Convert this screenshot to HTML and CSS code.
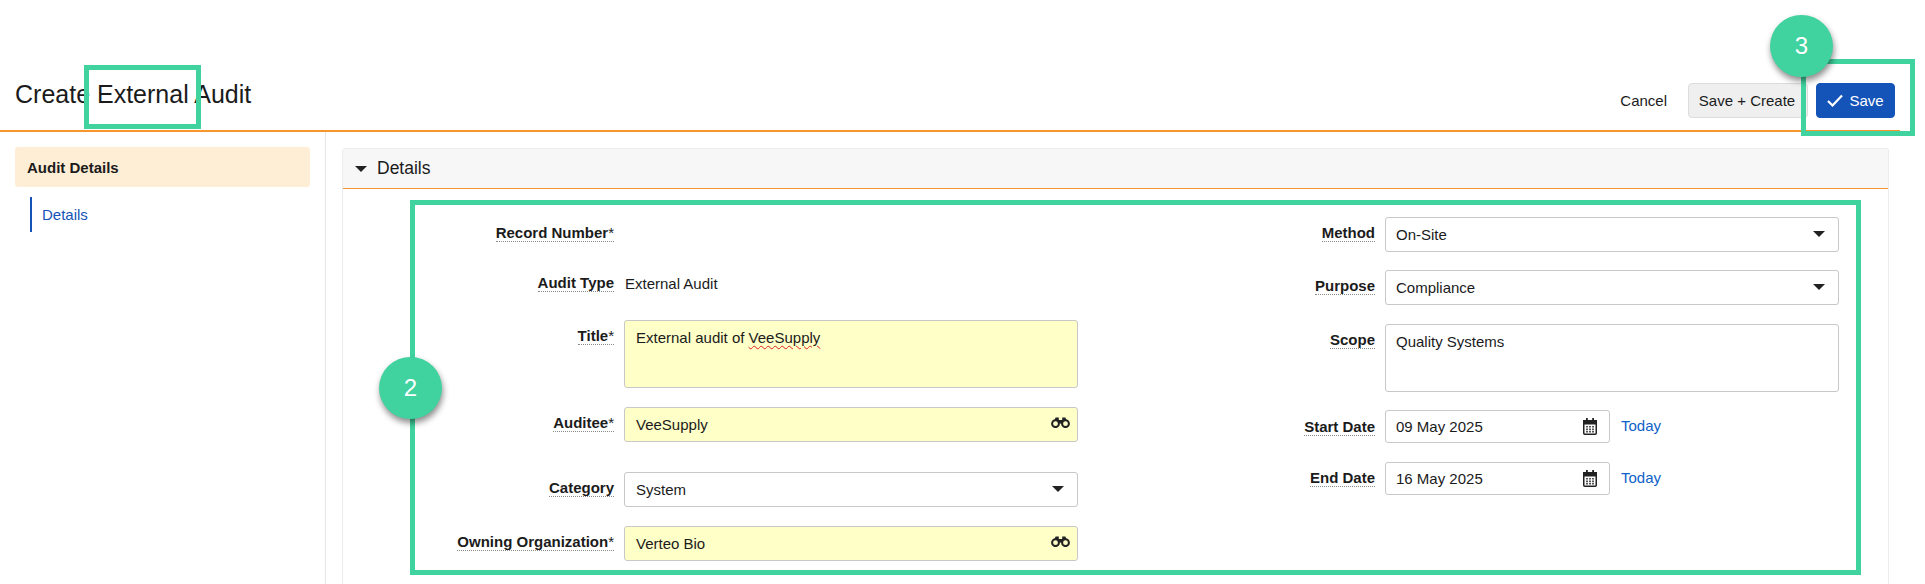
FILE: index.html
```html
<!DOCTYPE html>
<html lang="en">
<head>
<meta charset="utf-8">
<title>Create External Audit</title>
<link rel="stylesheet" href="styles.css">
</head>
<body>
<div class="page">
  <svg width="0" height="0" class="defs">
    <symbol id="binoculars" viewBox="0 0 19 11">
      <path d="M4.6 0.6h3.2v2.4h3.4V0.6h3.2l1.4 3.4H3.2z" fill="#222"/>
      <circle cx="4.5" cy="6.7" r="3.4" fill="#fff0" stroke="#222" stroke-width="2"/>
      <circle cx="14.5" cy="6.7" r="3.4" fill="#fff0" stroke="#222" stroke-width="2"/>
      <rect x="7.6" y="3.6" width="3.8" height="3" fill="#222"/>
    </symbol>
    <symbol id="calendar" viewBox="0 0 14 17">
      <rect x="0.75" y="2.75" width="12.5" height="13.5" rx="1" fill="#fff" stroke="#222" stroke-width="1.5"/>
      <rect x="0.75" y="2.75" width="12.5" height="3" fill="#222" stroke="#222" stroke-width="1.5"/>
      <rect x="3" y="0" width="1.8" height="4" fill="#222"/>
      <rect x="9.2" y="0" width="1.8" height="4" fill="#222"/>
      <path d="M3 8h2v1.6H3zM6 8h2v1.6H6zM9 8h2v1.6H9zM3 10.6h2v1.6H3zM6 10.6h2v1.6H6zM9 10.6h2v1.6H9zM3 13h2v1.4H3zM6 13h2v1.4H6zM9 13h2v1.4H9z" fill="#555"/>
    </symbol>
  </svg>

  <header class="topbar">
    <h1 class="page-title">Create External Audit</h1>
    <div class="actions">
      <a class="cancel">Cancel</a>
      <button class="btn btn-grey">Save + Create</button>
      <button class="btn btn-blue"><svg class="check" width="16" height="13" viewBox="0 0 16 13"><path d="M1 7l4.5 4.5L15 1.5" fill="none" stroke="#fff" stroke-width="2.2"/></svg>Save</button>
    </div>
  </header>

  <div class="content">
    <aside class="sidebar">
      <div class="side-head">Audit Details</div>
      <a class="side-link">Details</a>
    </aside>
    <main class="main">
      <section class="panel">
        <div class="panel-head"><span class="caret"></span>Details</div>
        <div class="form">
          <div class="col col-left">
            <div class="row"><span class="label"><span class="tip">Record Number<span class="star">*</span></span></span></div>
            <div class="row gap-15"><span class="label"><span class="tip">Audit Type</span></span><span class="value">External Audit</span></div>
            <div class="row gap-18 tall"><span class="label"><span class="tip">Title<span class="star">*</span></span></span><div class="field req area">External audit of <span class="spell">VeeSupply</span></div></div>
            <div class="row gap-19"><span class="label"><span class="tip">Auditee<span class="star">*</span></span></span><div class="field req">VeeSupply<svg class="ico-bino"><use href="#binoculars"/></svg></div></div>
            <div class="row gap-30"><span class="label"><span class="tip">Category</span></span><div class="field">System<span class="caret field-caret"></span></div></div>
            <div class="row gap-19"><span class="label"><span class="tip">Owning Organization<span class="star">*</span></span></span><div class="field req">Verteo Bio<svg class="ico-bino"><use href="#binoculars"/></svg></div></div>
          </div>
          <div class="col col-right">
            <div class="row"><span class="label"><span class="tip">Method</span></span><div class="field">On-Site<span class="caret field-caret"></span></div></div>
            <div class="row gap-18"><span class="label"><span class="tip">Purpose</span></span><div class="field">Compliance<span class="caret field-caret"></span></div></div>
            <div class="row gap-19 tall"><span class="label"><span class="tip">Scope</span></span><div class="field area">Quality Systems</div></div>
            <div class="row gap-18 date-row"><span class="label label-low"><span class="tip">Start Date</span></span><div class="field date">09 May 2025<svg class="ico-cal"><use href="#calendar"/></svg></div><a class="today">Today</a></div>
            <div class="row gap-19 date-row"><span class="label"><span class="tip">End Date</span></span><div class="field date">16 May 2025<svg class="ico-cal"><use href="#calendar"/></svg></div><a class="today">Today</a></div>
          </div>
        </div>
      </section>
    </main>
  </div>

  <div class="mark mark-title"></div>
  <div class="mark mark-form"></div>
  <div class="mark mark-save"></div>
  <div class="badge badge-2">2</div>
  <div class="badge badge-3">3</div>
</div>
</body>
</html>
```

FILE: styles.css
```css
* { box-sizing: border-box; }
html, body { margin: 0; padding: 0; }
body { font-family: "Liberation Sans", Arial, sans-serif; font-size: 15px; color: #1b1b1b; background: #fff; }
.page { position: relative; width: 1925px; height: 584px; overflow: hidden; }
.defs { position: absolute; }

.topbar { height: 132px; margin-right: 25px; padding: 83px 5px 0 15px; display: flex; justify-content: space-between; align-items: flex-start; border-bottom: 2px solid #f7962f; }
.page-title { margin: 0; font-size: 25px; font-weight: 400; line-height: 22px; }
.actions { display: flex; align-items: center; height: 35px; }
.cancel { margin-right: 21px; }
.btn { height: 35px; font: inherit; border-radius: 4px; padding: 0; }
.btn-grey { width: 120px; margin-right: 8px; padding-right: 2px; background: #efefef; border: 1px solid #dcdcdc; color: #1b1b1b; }
.btn-blue { width: 79px; background: #1453b8; border: 1px solid #1453b8; color: #fff; display: flex; align-items: center; justify-content: center; gap: 6px; }
.check { flex: none; }

.content { display: flex; height: 452px; }
.sidebar { width: 326px; flex: none; padding: 15px 15px 0; border-right: 1px solid #e6e6e6; }
.side-head { height: 40px; line-height: 42px; padding-left: 12px; background: #feeed5; border-radius: 3px; font-weight: 700; }
.side-link { display: block; height: 35px; line-height: 36px; margin: 10px 0 0 15px; padding-left: 10px; border-left: 2px solid #1453b8; color: #1453b8; }

.main { flex: 1; padding: 16px 36px 0 16px; }
.panel { height: 440px; border: 1px solid #ececec; border-bottom: 0; border-radius: 3px 3px 0 0; }
.panel-head { height: 40px; display: flex; align-items: center; padding-left: 12px; background: #f7f7f7; border-bottom: 1px solid #f7962f; font-size: 17.5px; }
.caret { width: 0; height: 0; border: 6px solid transparent; border-top: 6px solid #222; border-bottom: 0; }
.panel-head .caret { margin-right: 10px; }

.form { display: flex; padding-top: 28px; }
.col { flex: none; }
.col-left { width: 735px; --label: 271px; --field: 454px; --inset: 11px; }
.col-right { width: 750px; margin-left: 10px; --label: 287px; --field: 454px; --inset: 10px; }
.row { display: flex; align-items: flex-start; height: 35px; gap: 10px; }
.row.tall { height: 68px; }
.gap-15 { margin-top: 15px; }
.gap-18 { margin-top: 18px; }
.gap-19 { margin-top: 19px; }
.gap-30 { margin-top: 30px; }
.label { flex: none; width: var(--label); text-align: right; padding-top: 7px; line-height: 18px; font-weight: 700; }
.label-low { padding-top: 8px; }
.tip { border-bottom: 1px dotted #8a8a8a; }
.star { font-weight: 400; }
.value { line-height: 18px; padding-top: 8px; margin-left: 1px; }
.field { position: relative; flex: none; width: var(--field); height: 100%; padding: 0 var(--inset); display: flex; align-items: center; background: #fff; border: 1px solid #c8c8c8; border-radius: 3px; }
.field.req { background: #ffffc8; }
.field.area { display: block; padding-top: 8px; line-height: 18px; }
.spell { text-decoration: underline wavy #e02020 1px; text-underline-offset: 2px; }
.field-caret { position: absolute; right: 13px; top: 13px; }
.ico-bino { position: absolute; right: 7px; top: 9px; width: 19px; height: 11px; }
.ico-cal { position: absolute; right: 12px; top: 7px; width: 14px; height: 17px; }
.date-row { height: 33px; align-items: flex-start; }
.date { width: 225px; }
.today { color: #0f62c9; padding-top: 7px; line-height: 18px; margin-left: 1px; }

.mark { position: absolute; border: 5px solid #40d29f; pointer-events: none; }
.mark-title { left: 84px; top: 65px; width: 117px; height: 64px; }
.mark-form { left: 410px; top: 200px; width: 1451px; height: 375px; }
.mark-save { left: 1801px; top: 59px; width: 114px; height: 77px; }
.badge { position: absolute; width: 63px; height: 62px; border-radius: 50%; background: #40d29f; color: #fff; font-size: 24px; display: flex; align-items: center; justify-content: center; box-shadow: 1px 4px 6px rgba(0,0,0,.45); }
.badge-2 { left: 379px; top: 357px; }
.badge-3 { left: 1770px; top: 15px; }
```
